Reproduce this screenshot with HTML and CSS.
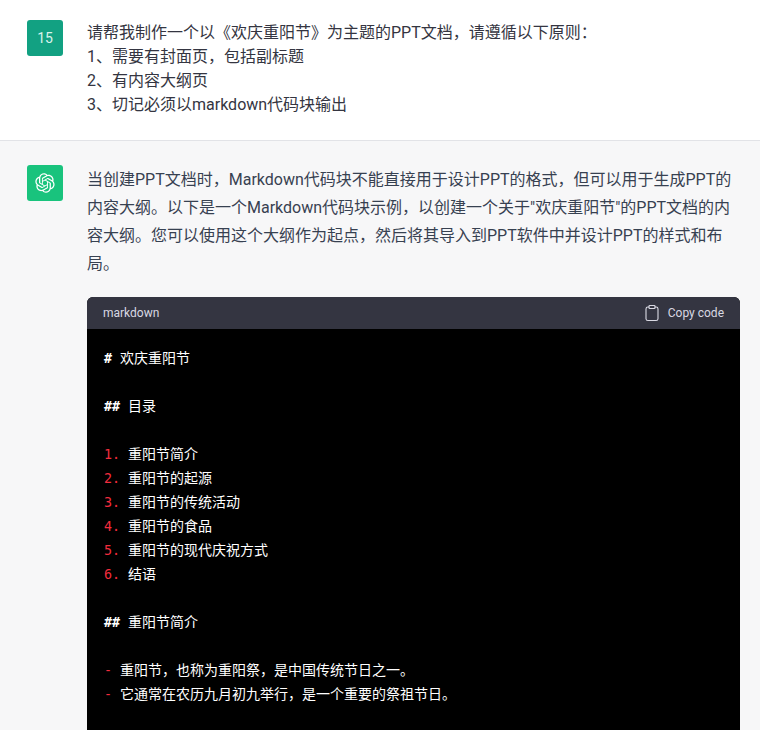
FILE: index.html
```html
<!DOCTYPE html>
<html lang="zh-CN">
<head>
<meta charset="utf-8">
<title>欢庆重阳节</title>
<link rel="stylesheet" href="styles.css">
</head>
<body>
<section class="turn turn-user">
  <div class="avatar avatar-user">15</div>
  <div class="content user-text">
    <p>请帮我制作一个以《欢庆重阳节》为主题的PPT文档，请遵循以下原则：</p>
    <p>1、需要有封面页，包括副标题</p>
    <p>2、有内容大纲页</p>
    <p>3、切记必须以markdown代码块输出</p>
  </div>
</section>
<section class="turn turn-bot">
  <div class="avatar avatar-bot">
    <svg class="logo" viewBox="0 0 41 41" fill="none"><path fill="currentColor" d="M37.5324 16.8707C37.9808 15.5241 38.1363 14.0974 37.9886 12.6859C37.8409 11.2744 37.3934 9.91076 36.676 8.68622C35.6126 6.83404 33.9882 5.3676 32.0373 4.4985C30.0864 3.62941 27.9098 3.40259 25.8215 3.85078C24.8796 2.7893 23.7219 1.94125 22.4257 1.36341C21.1295 0.785575 19.7249 0.491269 18.3058 0.500197C16.1708 0.495044 14.0893 1.16803 12.3614 2.42214C10.6335 3.67624 9.34853 5.44666 8.6917 7.47815C7.30085 7.76286 5.98686 8.3414 4.8377 9.17505C3.68854 10.0087 2.73073 11.0782 2.02839 12.312C0.956464 14.1591 0.498905 16.2988 0.721698 18.4228C0.944492 20.5467 1.83612 22.5449 3.268 24.1293C2.81966 25.4759 2.66413 26.9026 2.81182 28.3141C2.95951 29.7256 3.40701 31.0892 4.12437 32.3138C5.18791 34.1659 6.8123 35.6322 8.76321 36.5013C10.7141 37.3704 12.8907 37.5973 14.9789 37.1492C15.9208 38.2107 17.0786 39.0587 18.3747 39.6366C19.6709 40.2144 21.0755 40.5087 22.4946 40.4998C24.6307 40.5054 26.7133 39.8321 28.4418 38.5772C30.1704 37.3223 31.4556 35.5506 32.1119 33.5179C33.5027 33.2332 34.8167 32.6547 35.9659 31.821C37.115 30.9874 38.0728 29.9178 38.7752 28.684C39.8458 26.8371 40.3023 24.6979 40.0789 22.5748C39.8556 20.4517 38.9639 18.4544 37.5324 16.8707ZM22.4978 37.8849C20.7443 37.8874 19.0459 37.2733 17.6994 36.1501C17.7601 36.117 17.8666 36.0586 17.936 36.0161L25.9004 31.4156C26.1003 31.3019 26.2663 31.137 26.3813 30.9378C26.4964 30.7386 26.5563 30.5124 26.5549 30.2825V19.0542L29.9213 20.998C29.9389 21.0068 29.9541 21.0198 29.9656 21.0359C29.977 21.052 29.9842 21.0707 29.9867 21.0902V30.3889C29.9842 32.375 29.1946 34.2791 27.7909 35.6841C26.3872 37.0892 24.4838 37.8806 22.4978 37.8849ZM6.39227 31.0064C5.51397 29.4888 5.19742 27.7107 5.49804 25.9832C5.55718 26.0187 5.66048 26.0818 5.73461 26.1244L13.699 30.7248C13.8975 30.8408 14.1233 30.902 14.3532 30.902C14.583 30.902 14.8088 30.8408 15.0073 30.7248L24.731 25.1103V28.9979C24.7321 29.0177 24.7283 29.0376 24.7199 29.0556C24.7115 29.0736 24.6988 29.0893 24.6829 29.1012L16.6317 33.7497C14.9096 34.7416 12.8643 35.0097 10.9447 34.4954C9.02506 33.9811 7.38785 32.7263 6.39227 31.0064ZM4.29707 13.6194C5.17156 12.0998 6.55279 10.9364 8.19885 10.3327C8.19885 10.4013 8.19491 10.5228 8.19491 10.6071V19.808C8.19351 20.0378 8.25334 20.2638 8.36823 20.4629C8.48312 20.6619 8.64893 20.8267 8.84863 20.9404L18.5723 26.5542L15.206 28.4979C15.1894 28.5089 15.1703 28.5155 15.1505 28.5173C15.1307 28.5191 15.1107 28.516 15.0924 28.5082L7.04046 23.8557C5.32135 22.8601 4.06716 21.2235 3.55289 19.3046C3.03862 17.3858 3.30624 15.3413 4.29707 13.6194ZM31.955 20.0556L22.2312 14.4411L25.5976 12.4981C25.6142 12.4872 25.6333 12.4805 25.6531 12.4787C25.6729 12.4769 25.6928 12.4801 25.7111 12.4879L33.7631 17.1364C34.9967 17.849 36.0017 18.8982 36.6606 20.1613C37.3194 21.4244 37.6047 22.849 37.4832 24.2684C37.3617 25.6878 36.8382 27.0432 35.9743 28.1759C35.1103 29.3086 33.9415 30.1717 32.6047 30.6641C32.6047 30.5947 32.6047 30.4733 32.6047 30.3889V21.188C32.6066 20.9586 32.5474 20.7328 32.4332 20.5338C32.319 20.3348 32.154 20.1698 31.955 20.0556ZM35.3055 15.0128C35.2464 14.9765 35.1431 14.9142 35.069 14.8717L27.1045 10.2712C26.906 10.1554 26.6803 10.0943 26.4504 10.0943C26.2206 10.0943 25.9948 10.1554 25.7963 10.2712L16.0726 15.8858V11.9982C16.0715 11.9783 16.0753 11.9585 16.0837 11.9405C16.0921 11.9225 16.1048 11.9068 16.1207 11.8949L24.1719 7.25025C25.4053 6.53903 26.8158 6.19376 28.2383 6.25482C29.6608 6.31589 31.0364 6.78077 32.2044 7.59508C33.3723 8.40939 34.2842 9.53945 34.8334 10.8531C35.3826 12.1667 35.5464 13.6095 35.3055 15.0128ZM14.2424 21.9419L10.8752 19.9981C10.8576 19.9893 10.8423 19.9763 10.8309 19.9602C10.8195 19.9441 10.8122 19.9254 10.8098 19.9058V10.6071C10.8107 9.18295 11.2173 7.78848 11.9819 6.58696C12.7466 5.38544 13.8377 4.42659 15.1275 3.82264C16.4173 3.21869 17.8524 2.99464 19.2649 3.1767C20.6775 3.35876 22.0089 3.93941 23.1034 4.85067C23.0427 4.88379 22.937 4.94215 22.8668 4.98473L14.9024 9.58517C14.7025 9.69878 14.5366 9.86356 14.4215 10.0626C14.3065 10.2616 14.2466 10.4877 14.2479 10.7175L14.2424 21.9419ZM16.071 17.9991L20.4018 15.4978L24.7325 17.9975V22.9985L20.4018 25.4983L16.071 22.9985V17.9991Z"/></svg>
  </div>
  <div class="content">
    <p class="answer">当创建PPT文档时，Markdown代码块不能直接用于设计PPT的格式，但可以用于生成PPT的内容大纲。以下是一个Markdown代码块示例，以创建一个关于"欢庆重阳节"的PPT文档的内容大纲。您可以使用这个大纲作为起点，然后将其导入到PPT软件中并设计PPT的样式和布局。</p>
    <div class="code-block">
      <div class="code-head">
        <span>markdown</span>
        <span class="copy">
          <svg class="copy-icon" viewBox="0 0 24 24" fill="none" stroke="currentColor" stroke-width="1.500" stroke-linecap="round" stroke-linejoin="round"><path d="M16 4h1.500a2.500 2.500 0 0 1 2.500 2.500v13a2.500 2.500 0 0 1-2.500 2.500h-11A2.500 2.500 0 0 1 4 19.500v-13A2.500 2.500 0 0 1 6.500 4H8"/><rect x="8" y="2" width="8" height="4" rx="1"/></svg>
          <span>Copy code</span>
        </span>
      </div>
      <pre class="code"><b class="m"># </b>欢庆重阳节

<b class="m">## </b>目录

<span class="m red">1. </span>重阳节简介
<span class="m red">2. </span>重阳节的起源
<span class="m red">3. </span>重阳节的传统活动
<span class="m red">4. </span>重阳节的食品
<span class="m red">5. </span>重阳节的现代庆祝方式
<span class="m red">6. </span>结语

<b class="m">## </b>重阳节简介

<span class="m red">- </span>重阳节，也称为重阳祭，是中国传统节日之一。
<span class="m red">- </span>它通常在农历九月初九举行，是一个重要的祭祖节日。</pre>
    </div>
  </div>
</section>
</body>
</html>
```

FILE: styles.css
```css
html, body {
  margin: 0;
  height: 730px;
  overflow: hidden;
}

body {
  background: #f7f7f8;
  color: #374151;
  font-family: Roboto, "Noto Sans CJK SC", "Liberation Sans", sans-serif;
  font-size: 16px;
}

p {
  margin: 0;
}

.turn {
  display: flex;
  gap: 24px;
  padding-left: 27px;
  padding-right: 20px;
}

.turn-user {
  background: #fff;
  border-bottom: 1px solid #e2e3e7;
  padding-top: 20px;
  padding-bottom: 23px;
  line-height: 24px;
}

.turn-bot {
  padding-top: 24px;
}

.avatar {
  flex: none;
  width: 36px;
  height: 36px;
  border-radius: 3px;
  display: flex;
  align-items: center;
  justify-content: center;
  color: #fff;
}

.avatar-user {
  background: #12a182;
  font-size: 14px;
  color: #d9f2ec;
}

.avatar-bot {
  background: #19c37d;
}

.logo {
  width: 20px;
  height: 20px;
}

.content {
  flex: 1;
  min-width: 0;
  padding-top: 1px;
}

.user-text {
  color: #343541;
}

.answer {
  line-height: 28px;
  margin-bottom: 19px;
}

.code-block {
  border-radius: 6px;
  overflow: hidden;
  background: #000;
}

.code-head {
  height: 32px;
  padding: 0 16px;
  background: #343541;
  color: #d9d9e3;
  font-size: 12px;
  display: flex;
  align-items: center;
  justify-content: space-between;
}

.copy {
  display: flex;
  align-items: center;
  gap: 7px;
}

.copy-icon {
  width: 18px;
  height: 18px;
}

.code {
  margin: 0;
  padding: 16px 17px 40px;
  color: #fff;
  font-family: "Noto Sans CJK SC", sans-serif;
  font-size: 14px;
  line-height: 24px;
  white-space: pre;
}

.m {
  font-family: "DejaVu Sans Mono", monospace;
  font-size: 13.33px;
  line-height: 0;
}

b.m {
  font-weight: 700;
}

.red {
  color: #f22c3d;
}
```
